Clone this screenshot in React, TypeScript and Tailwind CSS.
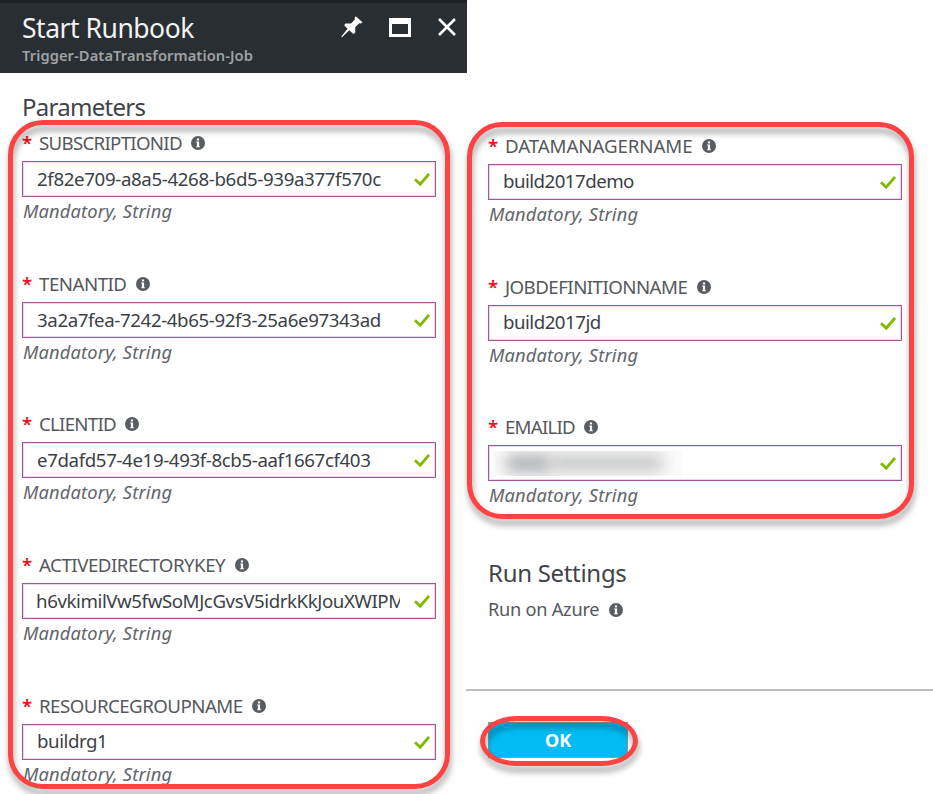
import React from "react";

function InfoIcon() {
  return (
    <svg className="h-[14px] w-[14px] shrink-0" viewBox="0 0 14 14">
      <circle cx="7" cy="7" r="7" fill="#595d62" />
      <rect x="5.9" y="2.5" width="2.2" height="1.9" fill="#fff" />
      <path d="M5.2 5.4h2.9v4.9h.8v1H5.2v-1h.7V6.4h-.7z" fill="#fff" />
    </svg>
  );
}

function CheckIcon() {
  return (
    <svg className="mt-[2px] h-[14px] w-[16px] shrink-0" viewBox="0 0 16 14" fill="none">
      <path d="M1 6.3 6.2 11.2 15 .9" stroke="#7fba00" strokeWidth="2.8" />
    </svg>
  );
}

function PinIcon() {
  return (
    <svg className="h-[22px] w-[22px]" viewBox="0 0 22 22" fill="#fff">
      <path d="M14.7.3 21.5 6.3 19.8 7.6 18.2 7.2 14.2 11.3 14.3 16.6 12.4 18.1 8.2 14.3 1 21.3.3 20.6 6.6 12.8 3.1 9.2 4.6 7.5 10 7.5 13.9 3.6 13.5 1.9z" />
    </svg>
  );
}

type FieldProps = { label: string; value: string; labelClass: string; valueClass: string };

function Field({ label, value, labelClass, valueClass }: FieldProps) {
  return (
    <div className="flex h-[140.7px] w-[414px] shrink-0 flex-col">
      <div className="flex h-9 items-center text-[18.7px] whitespace-nowrap text-[#55585c]">
        <span className="w-[17px] font-semibold text-[#e81123]">*</span>
        <span className={labelClass}>{label}</span>
        <span className="ml-[9.5px]">
          <InfoIcon />
        </span>
      </div>
      <div className="flex h-9 shrink-0 items-center justify-between border border-[#a352a0] pr-[5px] shadow-[inset_0_0_0_1px_rgba(163,82,160,0.22)]">
        {value === "" ? (
          <div className="ml-[5px] flex h-[25px] w-[188px] items-center overflow-hidden bg-[#fbfbfb]">
            <div className="ml-3 h-[15px] w-[45px] bg-[#a0a2a4] blur-[8px]" />
            <div className="h-[14px] w-[112px] bg-[#bcbdbe] blur-[8px]" />
          </div>
        ) : (
          <div className={`mr-auto w-[377px] overflow-hidden text-[18.7px] leading-8 whitespace-nowrap text-[#3b3f46] ${valueClass}`}>
            {value}
          </div>
        )}
        <CheckIcon />
      </div>
      <div className="h-[30px] pl-px text-[18.3px] leading-[27px] tracking-[0.15px] text-[#62656a] italic">Mandatory, String</div>
    </div>
  );
}

const leftFields: FieldProps[] = [
  { label: "SUBSCRIPTIONID", value: "2f82e709-a8a5-4268-b6d5-939a377f570c", labelClass: "tracking-[-0.72px]", valueClass: "pl-[14px] tracking-[-0.36px]" },
  { label: "TENANTID", value: "3a2a7fea-7242-4b65-92f3-25a6e97343ad", labelClass: "tracking-[-0.5px]", valueClass: "pl-[14px] tracking-[-0.39px]" },
  { label: "CLIENTID", value: "e7dafd57-4e19-493f-8cb5-aaf1667cf403", labelClass: "tracking-[-0.75px]", valueClass: "pl-[14px] tracking-[-0.38px]" },
  { label: "ACTIVEDIRECTORYKEY", value: "h6vkimilVw5fwSoMJcGvsV5idrkKkJouXWIPM", labelClass: "tracking-[-0.48px]", valueClass: "pl-[13px] tracking-[-0.42px]" },
  { label: "RESOURCEGROUPNAME", value: "buildrg1", labelClass: "tracking-[-0.53px]", valueClass: "-mt-[2px] pl-[14px] tracking-[-0.45px]" },
];

const rightFields: FieldProps[] = [
  { label: "DATAMANAGERNAME", value: "build2017demo", labelClass: "tracking-[-0.08px]", valueClass: "-mt-[2px] pl-[14px] tracking-[-0.53px]" },
  { label: "JOBDEFINITIONNAME", value: "build2017jd", labelClass: "tracking-[-0.54px]", valueClass: "-mt-px pl-[14px] tracking-[-0.5px]" },
  { label: "EMAILID", value: "", labelClass: "tracking-[-0.8px]", valueClass: "" },
];

export default function App() {
  return (
    <div className="relative flex h-[794px] w-[933px] overflow-hidden bg-white font-['Noto_Sans',sans-serif]">
      <section className="flex w-[467px] shrink-0 flex-col">
        <header className="flex h-[73px] shrink-0 justify-between border-t-[3px] border-[#1f2327] bg-[#292e32] pr-[11px] pl-[22px]">
          <div className="whitespace-nowrap">
            <h1 className="mt-[5px] h-[36px] text-[26.5px] leading-[40px] tracking-[-0.48px] text-[#f3f3f3]">Start Runbook</h1>
            <p className="text-[14.7px] leading-[22px] font-semibold tracking-[0.08px] text-[#a0a2a4]">Trigger-DataTransformation-Job</p>
          </div>
          <div className="mt-[13px] flex h-[22px] items-center">
            <PinIcon />
            <span className="ml-[26px] h-[19px] w-[22px] border-[3px] border-t-[6px] border-white" />
            <svg className="ml-[27px] h-[18px] w-[18px]" viewBox="0 0 18 18" stroke="#fff" strokeWidth="2.6">
              <path d="m1 1 16 16M17 1 1 17" />
            </svg>
          </div>
        </header>
        <h2 className="h-[52px] shrink-0 pt-[14px] pl-[22px] text-[24px] leading-[40px] tracking-[-0.72px] text-[#3f434a]">Parameters</h2>
        <div className="flex flex-col pl-[22px]">
          {leftFields.map((f) => (
            <Field key={f.label} {...f} />
          ))}
        </div>
      </section>

      <section className="flex grow flex-col pt-[128px]">
        <div className="flex flex-col pl-[21px]">
          {rightFields.map((f) => (
            <Field key={f.label} {...f} />
          ))}
          <h2 className="mt-[5px] h-[37px] text-[24px] leading-[36px] tracking-[-0.3px] text-[#3f434a]">Run Settings</h2>
          <div className="flex h-9 items-center gap-[10px] text-[18.2px] text-[#55585c]">
            <span className="tracking-[-0.25px]">Run on Azure</span>
            <InfoIcon />
          </div>
        </div>
        <div className="mt-[61px] -ml-px h-[2px] shrink-0 bg-[#bebebe]" />
        <div className="pt-[31px] pl-[21px]">
          <button className="h-[36px] w-[140px] border border-[#8d9aa0] bg-[#00bcf2] text-[18px] leading-[32px] font-bold tracking-[-0.2px] text-white">OK</button>
        </div>
      </section>

      {/* Callout outlines laid over the form */}
      <div className="absolute top-[120px] left-[8px] h-[669px] w-[442px] rounded-[35px] border-[5px] border-[#ff4343] drop-shadow-[1px_6px_3px_rgba(0,0,0,0.36)]" />
      <div className="absolute top-[122px] left-[467px] h-[397px] w-[447px] rounded-[35px] border-[5px] border-[#ff4343] drop-shadow-[1px_6px_3px_rgba(0,0,0,0.36)]" />
      <div className="absolute top-[716px] left-[480px] h-[50px] w-[158px] rounded-[36px/25px] border-[5px] border-[#ff4343] drop-shadow-[1px_6px_3px_rgba(0,0,0,0.36)]" />
    </div>
  );
}
